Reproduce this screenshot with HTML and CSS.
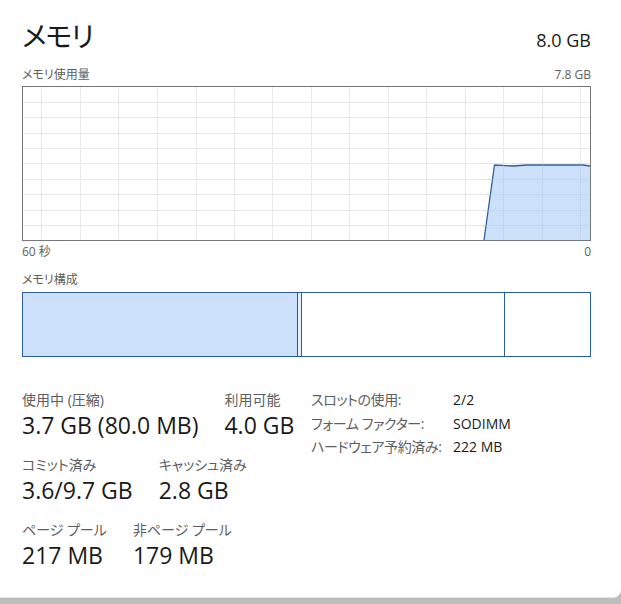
FILE: index.html
```html
<!DOCTYPE html>
<html lang="ja">
<head>
<meta charset="utf-8">
<title>メモリ</title>
<link rel="stylesheet" href="styles.css">
</head>
<body>
<div class="card">
  <div class="header">
    <div class="title">メモリ</div>
    <div class="total">8.0 GB</div>
  </div>
  <div class="row-labels">
    <span>メモリ使用量</span>
    <span>7.8 GB</span>
  </div>
  <svg class="graph" width="569" height="155" viewBox="0 0 569 155">
    <g class="grid">
      <line x1="19.5" y1="0" x2="19.5" y2="155"/>
      <line x1="58.5" y1="0" x2="58.5" y2="155"/>
      <line x1="96.5" y1="0" x2="96.5" y2="155"/>
      <line x1="135.5" y1="0" x2="135.5" y2="155"/>
      <line x1="174.5" y1="0" x2="174.5" y2="155"/>
      <line x1="212.5" y1="0" x2="212.5" y2="155"/>
      <line x1="250.5" y1="0" x2="250.5" y2="155"/>
      <line x1="289.5" y1="0" x2="289.5" y2="155"/>
      <line x1="327.5" y1="0" x2="327.5" y2="155"/>
      <line x1="366.5" y1="0" x2="366.5" y2="155"/>
      <line x1="404.5" y1="0" x2="404.5" y2="155"/>
      <line x1="443.5" y1="0" x2="443.5" y2="155"/>
      <line x1="481.5" y1="0" x2="481.5" y2="155"/>
      <line x1="520.5" y1="0" x2="520.5" y2="155"/>
      <line x1="558.5" y1="0" x2="558.5" y2="155"/>
      <line x1="0" y1="16.5" x2="569" y2="16.5"/>
      <line x1="0" y1="31.5" x2="569" y2="31.5"/>
      <line x1="0" y1="47.5" x2="569" y2="47.5"/>
      <line x1="0" y1="62.5" x2="569" y2="62.5"/>
      <line x1="0" y1="77.5" x2="569" y2="77.5"/>
      <line x1="0" y1="93.5" x2="569" y2="93.5"/>
      <line x1="0" y1="108.5" x2="569" y2="108.5"/>
      <line x1="0" y1="124.5" x2="569" y2="124.5"/>
      <line x1="0" y1="139.5" x2="569" y2="139.5"/>
    </g>
    <polygon class="area" points="462,154 472.5,79 491,80 505,79 561,79 568,80 568,154"/>
    <polyline class="line" points="462,154 472.5,79 491,80 505,79 561,79 568,80"/>
    <g class="grid-over">
      <line x1="481.5" y1="79" x2="481.5" y2="154"/>
      <line x1="520.5" y1="79" x2="520.5" y2="154"/>
      <line x1="558.5" y1="79" x2="558.5" y2="154"/>
      <line x1="466" y1="93.5" x2="568" y2="93.5"/>
      <line x1="464" y1="108.5" x2="568" y2="108.5"/>
      <line x1="462" y1="124.5" x2="568" y2="124.5"/>
      <line x1="460" y1="139.5" x2="568" y2="139.5"/>
    </g>
    <rect class="frame" x="0.5" y="0.5" width="568" height="154"/>
  </svg>
  <div class="axis">
    <span>60 秒</span>
    <span>0</span>
  </div>
  <div class="section-label">メモリ構成</div>
  <div class="composition">
    <div class="seg in-use" style="width:274px"></div>
    <div class="seg modified" style="width:4px"></div>
    <div class="seg standby" style="width:203px"></div>
    <div class="seg free"></div>
  </div>
  <div class="stats">
    <div class="stats-left">
      <div class="stat-row">
        <div class="stat">
          <div class="label">使用中 (圧縮)</div>
          <div class="value">3.7 GB (80.0 MB)</div>
        </div>
        <div class="stat">
          <div class="label">利用可能</div>
          <div class="value">4.0 GB</div>
        </div>
      </div>
      <div class="stat-row">
        <div class="stat">
          <div class="label">コミット済み</div>
          <div class="value">3.6/9.7 GB</div>
        </div>
        <div class="stat">
          <div class="label">キャッシュ済み</div>
          <div class="value">2.8 GB</div>
        </div>
      </div>
      <div class="stat-row">
        <div class="stat">
          <div class="label">ページ プール</div>
          <div class="value">217 MB</div>
        </div>
        <div class="stat">
          <div class="label">非ページ プール</div>
          <div class="value">179 MB</div>
        </div>
      </div>
    </div>
    <div class="stats-right">
      <div class="k">スロットの使用:</div><div class="v">2/2</div>
      <div class="k">フォーム ファクター:</div><div class="v">SODIMM</div>
      <div class="k">ハードウェア予約済み:</div><div class="v">222 MB</div>
    </div>
  </div>
</div>
</body>
</html>
```

FILE: styles.css
```css
html, body {
  margin: 0;
  padding: 0;
}
body {
  background: linear-gradient(#d6d6d6, #bdbdbd);
  width: 621px;
  height: 604px;
  overflow: hidden;
  font-family: "Open Sans", "Noto Sans CJK JP", sans-serif;
  font-feature-settings: "palt";
  color: #1a1a1a;
}
.card {
  box-sizing: border-box;
  width: 621px;
  height: 597px;
  background: #ffffff;
  border-bottom-right-radius: 8px;
  padding: 0 30px 0 22px;
  box-shadow: 0 1px 0 #e4e4e4;
}
.header {
  height: 64px;
  display: flex;
  justify-content: space-between;
  align-items: baseline;
}
.title {
  font-size: 28px;
  line-height: 30px;
  padding-top: 20px;
  font-family: "Noto Sans CJK JP", sans-serif;
  letter-spacing: -1px;
}
.total {
  font-size: 18px;
  line-height: 30px;
}
.row-labels, .axis {
  display: flex;
  justify-content: space-between;
  font-size: 12px;
  line-height: 22px;
  height: 22px;
  color: #5e5e5e;
}
.graph {
  display: block;
}
.grid line {
  stroke: #e8e8e8;
  stroke-width: 1;
}
.grid-over line {
  stroke: #b9cde6;
  stroke-width: 1;
  opacity: 0.55;
}
.area {
  fill: #cce0fa;
}
.line {
  fill: none;
  stroke: #2e5f9c;
  stroke-width: 1.3;
}
.frame {
  fill: none;
  stroke: #777777;
  stroke-width: 1;
}
.section-label {
  font-size: 12px;
  line-height: 22px;
  height: 22px;
  margin-top: 6px;
  color: #5e5e5e;
}
.composition {
  box-sizing: border-box;
  margin-top: 1px;
  height: 65px;
  width: 569px;
  display: flex;
  border: 1.5px solid #2c5d98;
}
.seg {
  box-sizing: border-box;
  height: 100%;
}
.seg + .seg {
  border-left: 1.5px solid #2c5d98;
}
.in-use {
  background: #cce0fa;
}
.modified {
  background: #e4eefc;
}
.standby, .free {
  background: #ffffff;
}
.free {
  flex: 1;
}
.stats {
  display: grid;
  grid-template-columns: 289px auto;
  margin-top: 33px;
}
.stats-left {
  display: flex;
  flex-direction: column;
  gap: 15px;
}
.stat-row {
  display: flex;
  gap: 26px;
}
.label {
  font-size: 14px;
  line-height: 20px;
  color: #5e5e5e;
  white-space: nowrap;
}
.value {
  font-size: 23px;
  line-height: 30px;
  white-space: nowrap;
}
.stats-right {
  display: grid;
  grid-template-columns: 142px auto;
  align-content: start;
  font-size: 14px;
  line-height: 23.5px;
  margin-top: -2px;
}
.k {
  color: #5e5e5e;
  white-space: nowrap;
  letter-spacing: -0.4px;
}
.v {
  color: #1a1a1a;
  white-space: nowrap;
}
```
